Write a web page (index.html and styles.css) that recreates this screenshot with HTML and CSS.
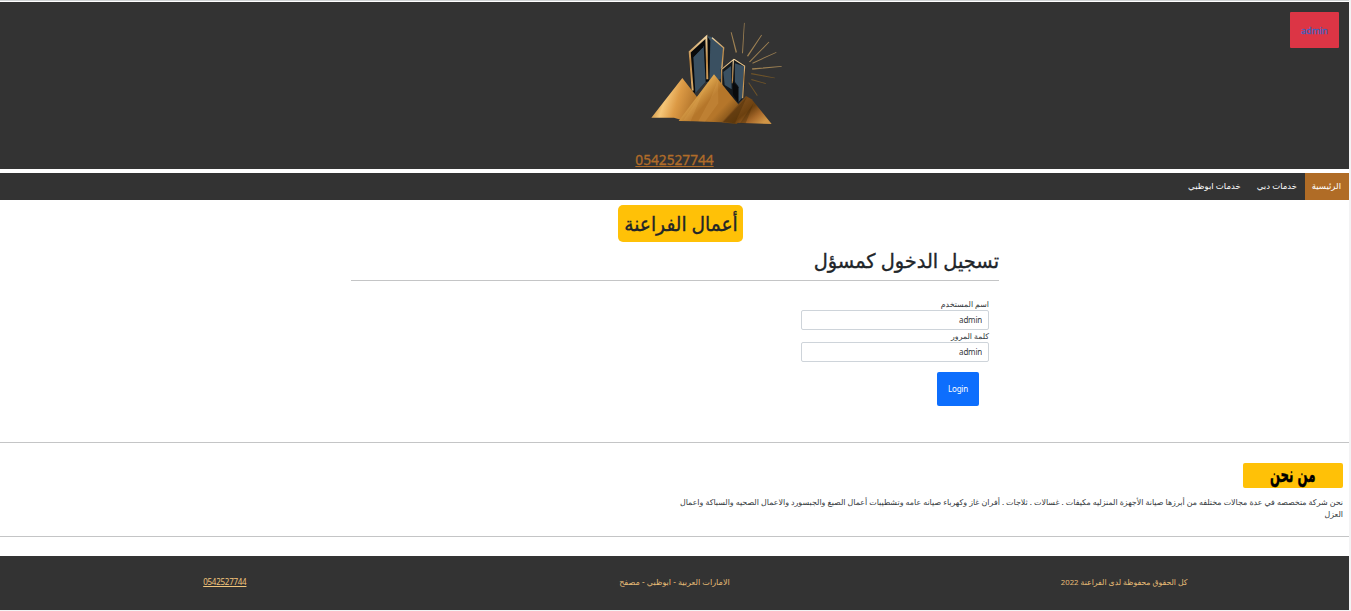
FILE: index.html
```html
<!DOCTYPE html>
<html lang="ar" dir="rtl">
<head>
<meta charset="utf-8">
<title>الفراعنة</title>
<link rel="stylesheet" href="styles.css">
</head>
<body>
<div class="page">
  <header class="header">
    <a class="admin" href="#">admin</a>
    <svg class="logo" viewBox="0 0 510 375" aria-hidden="true">
      <defs>
        <linearGradient id="gold" x1="0" y1="0.4" x2="1" y2="0.7">
          <stop offset="0" stop-color="#b87a2c"/><stop offset=".3" stop-color="#f5c678"/><stop offset=".55" stop-color="#dc9a45"/><stop offset="1" stop-color="#a86b24"/>
        </linearGradient>
        <linearGradient id="sand" x1="0" y1="0" x2="1" y2="0.7">
          <stop offset="0" stop-color="#d99a40"/><stop offset=".35" stop-color="#e0a850"/><stop offset=".55" stop-color="#b5762a"/><stop offset=".75" stop-color="#b5762a"/><stop offset="1" stop-color="#6b4211"/>
        </linearGradient>
        <linearGradient id="dark" x1="0" y1="0" x2="1" y2="0.7">
          <stop offset="0" stop-color="#52350e"/><stop offset=".4" stop-color="#7a4b18"/><stop offset=".6" stop-color="#6b400f"/><stop offset=".8" stop-color="#a8692a"/><stop offset="1" stop-color="#d09546"/>
        </linearGradient>
        <linearGradient id="edge" x1="0" y1="0" x2="0" y2="1">
          <stop offset="0" stop-color="#f0d3a0"/><stop offset=".45" stop-color="#b98545"/><stop offset="1" stop-color="#dcae6b"/>
        </linearGradient>
      </defs>
      <path d="M232 78 248 82 281 113 277 205 232 220Z" fill="#3a5061"/>
      <path d="M232 80 241 92 238 215 228 215Z" fill="#090a0b"/>
      <path d="M246 83 281 113 275 180" fill="none" stroke="url(#edge)" stroke-width="4"/>
      <path d="M176 125 230 76 237 90 233 210 195 250 184 240Z" fill="#090a0b"/>
      <path d="M190 140 221 108 227 216 196 250Z" fill="#3a5061"/>
      <path d="M184 132 219 101 219 112 190 142Z" fill="#090a0b"/>
      <path d="M188 242 179 126 229 80 232 208" fill="none" stroke="url(#edge)" stroke-width="6"/>
      <path d="M272 178 311 145 346 166 341 265 325 280 276 235Z" fill="#14191d"/>
      <path d="M280 186 303 168 305 238 284 225ZM315 160 342 169 338 262 326 276 325 229 315 216Z" fill="#3a5061"/>
      <path d="M275 226 275 178 310 149 307 220M312 148 344 168 338 265" fill="none" stroke="url(#edge)" stroke-width="3.5"/>
      <path d="M308 214 325 232 324 277 309 254Z" fill="#090a0b"/>
      <path d="M64 323 157 204 204 265 162 332 132 323Z" fill="url(#gold)"/>
      <path d="M146 333 252 193 348 312 320 342 274 337 190 334Z" fill="url(#sand)"/>
      <path d="M252 195 215 255 182 334 160 331ZM264 210 242 265 205 334 225 335 265 280Z" fill="#f0bf6c" opacity=".15"/>
      <path d="M276 337 348 258 365 268 425 342Z" fill="url(#dark)"/>
      <path d="M350 262 315 340 280 336ZM371 279 347 340 330 340Z" fill="#412706" opacity=".35"/>
      <g fill="#b8935a">
        <path d="M302 67 305 67 321 127 317 128ZM342 38 344 39 339 130 336 130ZM394 74 396 76 354 140 351 137ZM416 95 418 97 360 157 357 155ZM439 126 439 128 368 161 367 158ZM366 175 455 168 455 170 367 179Z" opacity=".8"/>
        <path d="M364 189 435 203 434 205 363 193ZM365 207 408 220 407 222 363 210ZM357 217 383 256 381 258 355 219Z" fill="#6f5429"/>
      </g>
    </svg>
    <a class="phone" href="#">0542527744</a>
  </header>
  <nav class="nav">
    <a class="active" href="#">الرئيسية</a>
    <a href="#">خدمات دبي</a>
    <a href="#">خدمات ابوظبي</a>
  </nav>
  <main class="main">
    <h1 class="badge"><span>أعمال الفراعنة</span></h1>
    <section class="login">
      <h2 class="title"><span>تسجيل الدخول كمسؤل</span></h2>
      <form class="form">
        <label for="user">اسم المستخدم</label>
        <input id="user" type="text" value="admin">
        <label for="pass">كلمة المرور</label>
        <input id="pass" type="text" value="admin">
        <button type="button">Login</button>
      </form>
    </section>
  </main>
  <section class="about">
    <h3><span>من نحن</span></h3>
    <p>نحن شركة متخصصه في عدة مجالات مختلفه من أبرزها صيانة الأجهزة المنزليه مكيفات . غسالات . ثلاجات . أفران غاز وكهرباء صيانه عامه وتشطيبات أعمال الصبغ والجبسورد والاعمال الصحيه والسباكة واعمال<br>العزل</p>
  </section>
  <footer class="footer">
    <div class="rights">كل الحقوق محفوظة لدى الفراعنة 2022</div>
    <div class="place">الامارات العربية - ابوظبي - مصفح</div>
    <div class="call"><a href="#">0542527744</a></div>
  </footer>
</div>
</body>
</html>
```

FILE: styles.css
```css
* { box-sizing: border-box; }
html { background: #f3f3f4; overflow: hidden; }
body {
  margin: 0;
  color: #212529;
  font: 8px/12px "Noto Sans", "DejaVu Sans", sans-serif;
}
.page {
  width: 1349px;
  height: 610px;
  margin-right: 2px;
  background: #fff;
  border-top: 1px solid #cfd2d3;
}
.header {
  display: flex;
  flex-direction: column;
  align-items: center;
  position: relative;
  height: 167px;
  margin-top: 1px;
  background: #333;
}
.logo { width: 170px; height: 125px; margin-top: 8px; margin-right: -80px; flex: none; }
.admin {
  position: absolute;
  top: 10px;
  right: 10px;
  width: 49px;
  height: 36px;
  border-radius: 1px;
  background: #dc3545;
  color: #4062be;
  font-size: 9px;
  line-height: 38px;
  text-align: center;
  text-decoration: none;
  -webkit-text-stroke: .3px #4062be;
}
.phone {
  margin-top: 16px;
  color: #b06c29;
  font-size: 13.7px;
  line-height: 18px;
  -webkit-text-stroke: .35px #b06c29;
}
.nav {
  display: flex;
  height: 27px;
  margin-top: 4px;
  background: #333;
}
.nav a {
  padding: 0 8px;
  color: #fff;
  font-size: 8.5px;
  line-height: 26px;
  text-decoration: none;
  white-space: nowrap;
}
.nav .active { width: 44px; background: #b06c26; }
.main { height: 242px; padding-top: 5px; }
.badge {
  width: 125px;
  height: 37px;
  margin: 0 606px 0 0;
  border-radius: 5px;
  background: #ffc107;
  font-size: 20px;
  font-weight: 400;
  line-height: 38px;
  text-align: center;
  white-space: nowrap;
  -webkit-text-stroke: .35px #212529;
}
.badge span { display: inline-block; transform: scaleX(.93); }
.login { width: 648px; margin-right: 350px; }
.title {
  height: 39px;
  margin: 0;
  border-bottom: 1px solid #c4c5c6;
  font-size: 20px;
  font-weight: 400;
  line-height: 37px;
  white-space: nowrap;
  -webkit-text-stroke: .35px #212529;
}
.title span { display: inline-block; transform: scaleX(.97); transform-origin: right; }
.form {
  display: flex;
  flex-direction: column;
  width: 188px;
  margin: 17px 10px 0 0;
}
.form label { height: 12px; line-height: 13px; color: #33383c; font-size: 7.8px; }
.form input {
  height: 20px;
  padding: 0 6px 1px;
  border: 1px solid #ced4da;
  border-radius: 2px;
  background: #fff;
  color: #33383c;
  font: 8px "Noto Sans", sans-serif;
  letter-spacing: -.2px;
}
.form button {
  width: 42px;
  height: 34px;
  margin: 10px 10px 0 0;
  padding: 0 0 1px;
  border: 0;
  border-radius: 2px;
  background: #0d6efd;
  color: #fff;
  font: 8px "Noto Sans", sans-serif;
  letter-spacing: -.2px;
}
.about {
  height: 95px;
  padding: 20px 6px 0 0;
  border: 1px solid #c4c5c6;
  border-width: 1px 0;
}
.about h3 {
  width: 100px;
  height: 25px;
  margin: 0 0 8px;
  border-radius: 2px;
  background: #ffc107;
  color: #000;
  font: 700 19px/22px "DejaVu Sans", sans-serif;
  text-align: center;
  -webkit-text-stroke: .4px #000;
}
.about h3 span { display: inline-block; transform: scale(.62, 1.15); }
.about p { margin: 0; color: #33383c; font-size: 7.91px; white-space: nowrap; }
.footer {
  display: flex;
  height: 54px;
  margin-top: 19px;
  background: #333;
  color: #e6bc76;
  line-height: 52px;
  text-align: center;
}
.footer div { flex: 1; white-space: nowrap; }
.footer .rights { font-size: 7.75px; }
.footer .place { font-size: 8.15px; }
.footer .call { font-size: 8px; letter-spacing: -.25px; }
.footer a { color: #f3c67c; }
```
